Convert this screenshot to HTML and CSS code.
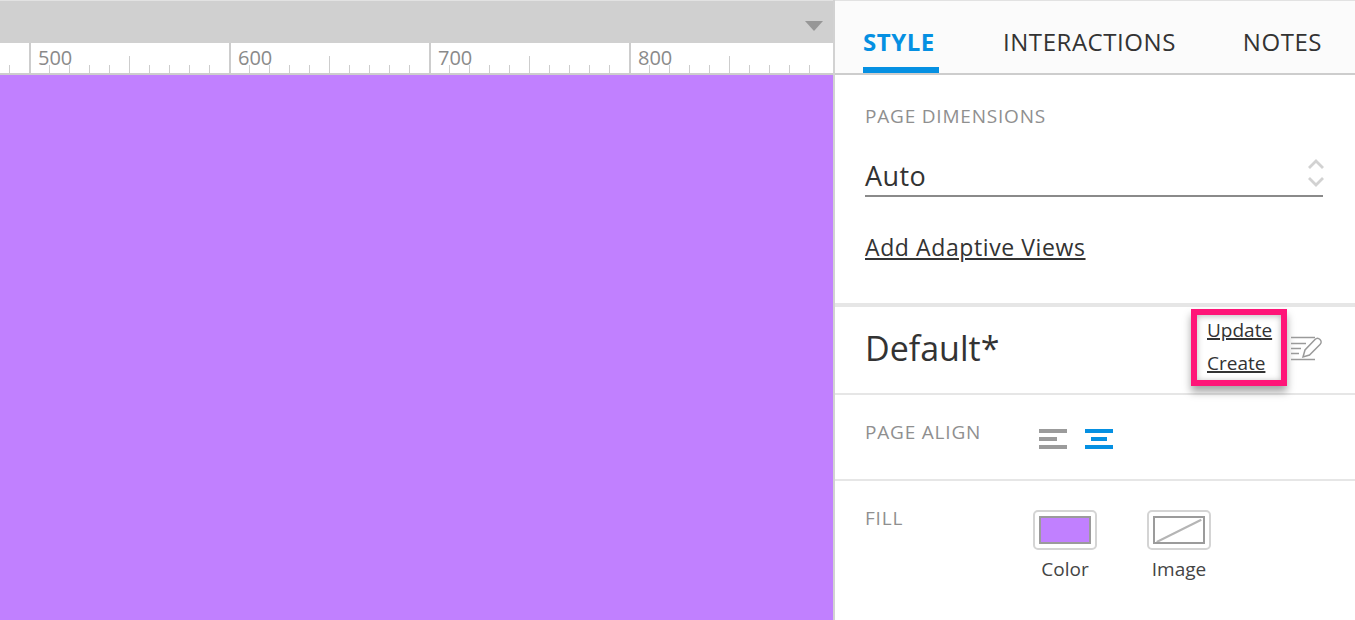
FILE: index.html
```html
<!DOCTYPE html>
<html lang="en">
<head>
    <meta charset="UTF-8">
    <title>Page Style</title>
    <link rel="stylesheet" href="styles.css">
</head>
<body>

<div class="app">
    <div class="canvas-area">
        <div class="top-bar">
            <svg class="top-arrow" width="18" height="10" viewBox="0 0 18 10"><path d="M0 0H18L9 10Z" fill="#979797"/></svg>
        </div>
        <div class="ruler">
            <div class="ruler-seg"></div>
            <div class="ruler-seg"><span>500</span></div>
            <div class="ruler-seg"><span>600</span></div>
            <div class="ruler-seg"><span>700</span></div>
            <div class="ruler-seg"><span>800</span></div>
        </div>
        <div class="page-fill"></div>
    </div>

    <div class="sidebar">
        <div class="tabs">
            <div class="tab active">STYLE</div>
            <div class="tab">INTERACTIONS</div>
            <div class="tab">NOTES</div>
        </div>

        <!-- page dimensions -->
        <div class="section dimensions">
            <div class="label">PAGE DIMENSIONS</div>
            <div class="select-row">
                <span>Auto</span>
                <svg width="18" height="28" viewBox="0 0 18 28"><path d="M2 9L9 2L16 9M2 19L9 26L16 19" fill="none" stroke="#d2d2d2" stroke-width="2.8"/></svg>
            </div>
            <a class="adaptive-link">Add Adaptive Views</a>
        </div>

        <div class="section default-row">
            <div class="default-name">Default*</div>
            <div class="style-actions">
                <a>Update</a>
                <a>Create</a>
            </div>
            <svg class="edit-icon" width="32" height="26" viewBox="0 0 32 26">
                <path d="M0 2.500H24M0 8.500H15M0 13.500H10M0 18.500H8M0 24.500H24" fill="none" stroke="#9a9a9a" stroke-width="1.500"/>
                <path d="M12 22L14 15L24 4.500C25.500 3 27.500 3 29 4.500C30.500 6 30.500 8 29 9.500L18.500 20Z" fill="#fff" stroke="#9a9a9a" stroke-width="1.500"/>
            </svg>
        </div>

        <div class="section align-row">
            <div class="label">PAGE ALIGN</div>
            <div class="align-icons">
                <div class="align-icon left"><i></i><i></i><i></i></div>
                <div class="align-icon center"><i></i><i></i><i></i></div>
            </div>
        </div>

        <div class="section fill-row">
            <div class="label">FILL</div>
            <div class="fill-options">
                <div class="fill-option">
                    <div class="swatch"><div class="swatch-inner color"></div></div>
                    <span>Color</span>
                </div>
                <div class="fill-option">
                    <div class="swatch">
                        <svg class="swatch-inner" width="52" height="28" viewBox="0 0 52 28"><path d="M0 28L52 2" stroke="#b5b5b5" stroke-width="2.500"/></svg>
                    </div>
                    <span>Image</span>
                </div>
            </div>
        </div>
    </div>
</div>

</body>
</html>
```

FILE: styles.css
```css
* {
    box-sizing: border-box;
}
body {
    margin: 0;
    height: 620px;
    overflow: hidden;
    background-color: white;
    font-family: "Open Sans", "Liberation Sans", sans-serif;
    color: #333;
}
.app {
    display: flex;
    height: 620px;
}
.canvas-area {
    width: 835px;
    flex: none;
    display: flex;
    flex-direction: column;
    border-right: 2px solid #d2d2d2;
    overflow: hidden;
}
.top-bar {
    height: 43px;
    flex: none;
    background-color: #d0d0d0;
    border-top: 1px solid #e2e2e2;
    display: flex;
    justify-content: flex-end;
    padding: 20px 10px 0 0;
}
.top-arrow {
    display: block;
}
.ruler {
    height: 32px;
    flex: none;
    display: flex;
    margin-left: -171px;
    background-color: white;
    border-bottom: 2px solid #cdcdcd;
}
.ruler-seg {
    width: 200px;
    flex: none;
    height: 30px;
    border-left: 2px solid #cdcdcd;
    padding-left: 7px;
    font-size: 20px;
    line-height: 30px;
    color: #8a8a8a;
    background-image:
        linear-gradient(#cdcdcd, #cdcdcd),
        repeating-linear-gradient(90deg, transparent 0, transparent 18px, #cdcdcd 18px, #cdcdcd 19px, transparent 19px, transparent 20px);
    background-repeat: no-repeat, no-repeat;
    background-size: 1px 17px, 198px 8px;
    background-position: 98px 13px, 0 22px;
}
.page-fill {
    flex: 1;
    background-color: #c180ff;
}
.sidebar {
    flex: 1;
    display: flex;
    flex-direction: column;
    min-width: 0;
}
.tabs {
    height: 75px;
    flex: none;
    display: flex;
    padding-left: 28px;
    background-color: #fbfbfb;
    border-top: 1px solid #e2e2e2;
    border-bottom: 2px solid #cdcdcd;
}
.tab {
    flex: none;
    font-size: 24px;
    letter-spacing: 0.55px;
    line-height: 82px;
    height: 72px;
    margin-right: 67px;
    white-space: nowrap;
}
.tab:last-child {
    margin-right: 0;
}
.tab.active {
    width: 76px;
    margin-right: 64px;
    color: #0590e2;
    font-weight: 700;
    border-bottom: 6px solid #0590e2;
}
.section {
    padding: 0 32px 0 30px;
    border-bottom: 2px solid #e6e6e6;
}
.label {
    font-size: 19px;
    letter-spacing: 0.8px;
    color: #8f8f8f;
}
.dimensions {
    height: 232px;
    padding-top: 28px;
    border-bottom-width: 4px;
}
.select-row {
    display: flex;
    justify-content: space-between;
    align-items: center;
    height: 46px;
    margin-top: 22px;
    border-bottom: 2px solid #8a8a8a;
    font-size: 27px;
}
.select-row span {
    margin-top: 4px;
    letter-spacing: 0.4px;
}
.select-row svg {
    margin-right: -2px;
}
.adaptive-link {
    display: block;
    margin-top: 34px;
    font-size: 23px;
    letter-spacing: 0.6px;
    text-decoration: underline;
}
.default-row {
    height: 88px;
    display: flex;
    align-items: flex-start;
}
.default-name {
    font-size: 34px;
    line-height: 82px;
    flex: 1;
}
.style-actions {
    width: 96px;
    height: 77px;
    margin: 2px 4px 0 0;
    padding: 0 0 0 10px;
    border: 6px solid #ff1578;
    box-shadow: 0 6px 8px rgba(0, 0, 0, 0.35), inset 0 1px 6px rgba(0, 0, 0, 0.28);
    background-color: white;
    font-size: 19px;
    line-height: 30px;
    display: flex;
    flex-direction: column;
    align-items: flex-start;
}
.style-actions a {
    text-decoration: underline;
    text-decoration-thickness: 2px;
    height: 34px;
}
.style-actions a:last-child {
    margin-top: 1px;
}
.edit-icon {
    margin-top: 28px;
    flex: none;
}
.align-row {
    height: 86px;
    display: flex;
    align-items: center;
}
.align-row .label {
    width: 174px;
    margin-top: -10px;
}
.align-icons {
    display: flex;
    gap: 18px;
    margin-top: 4px;
}
.align-icon {
    width: 28px;
    height: 20px;
    display: flex;
    flex-direction: column;
    justify-content: space-between;
}
.align-icon i {
    display: block;
    height: 4px;
    background-color: #9b9b9b;
}
.align-icon.left i:nth-child(2) {
    width: 18px;
}
.align-icon.center {
    align-items: center;
}
.align-icon.center i {
    width: 28px;
    background-color: #0590e2;
}
.align-icon.center i:nth-child(2) {
    width: 16px;
}
.fill-row {
    flex: 1;
    border-bottom: none;
    padding-top: 24px;
    display: flex;
}
.fill-row .label {
    width: 168px;
}
.fill-options {
    display: flex;
    gap: 50px;
    padding-top: 5px;
}
.fill-option {
    width: 64px;
    display: flex;
    flex-direction: column;
    align-items: center;
    font-size: 19px;
    color: #444;
}
.swatch {
    width: 64px;
    height: 40px;
    border: 2px solid #d4d4d4;
    border-radius: 5px;
    padding: 4px;
    margin-bottom: 6px;
}
.swatch-inner {
    display: block;
    width: 52px;
    height: 28px;
    border: 2px solid #9b9b9b;
}
.swatch-inner.color {
    background-color: #c180ff;
}
```
